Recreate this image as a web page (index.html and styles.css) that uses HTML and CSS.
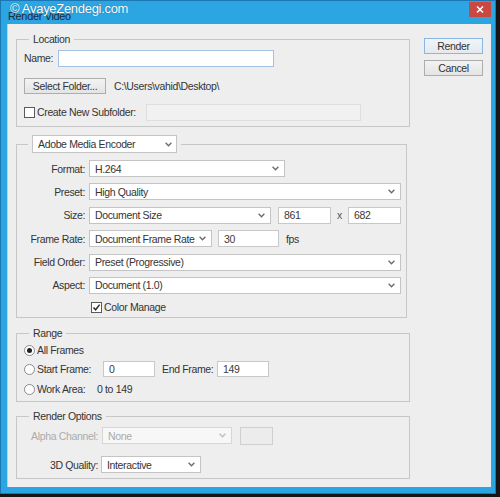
FILE: index.html
```html
<!DOCTYPE html>
<html>
<head>
<meta charset="utf-8">
<title>Render Video</title>
<link rel="stylesheet" href="styles.css">
</head>
<body>
<div class="window">
  <div class="titlebar">
    <span class="title">Render Video</span>
    <span class="watermark">© AvayeZendegi.com</span>
    <div class="close">
      <svg width="8" height="7" viewBox="0 0 8 7"><path d="M1 0.5 L7 6.5 M7 0.5 L1 6.5" stroke="#fff" stroke-width="1.5"/></svg>
    </div>
  </div>
  <div class="client">
    <div class="main">
      <fieldset class="group location">
        <legend>Location</legend>
        <div class="row name-row">
          <span class="name-label">Name:</span>
          <div class="input focus name-input"></div>
        </div>
        <div class="row folder-row">
          <div class="btn folder-btn">Select Folder...</div>
          <span class="path">C:\Users\vahid\Desktop\</span>
        </div>
        <div class="row sub-row">
          <span class="check"></span>
          <span class="sub-label">Create New Subfolder:</span>
          <div class="input disabled sub-input"></div>
        </div>
      </fieldset>

      <fieldset class="group encoder">
        <legend class="select-legend">
          <div class="select enc-select"><span>Adobe Media Encoder</span><svg class="chev" width="7" height="5" viewBox="0 0 7 5"><path d="M0.6 0.8 L3.5 3.8 L6.4 0.8" fill="none" stroke="#6a6a6a" stroke-width="1.3"/></svg></div>
        </legend>
        <div class="form-grid">
          <span class="lbl">Format:</span>
          <div class="ctl"><div class="select w-format"><span>H.264</span><svg class="chev" width="7" height="5" viewBox="0 0 7 5"><path d="M0.6 0.8 L3.5 3.8 L6.4 0.8" fill="none" stroke="#6a6a6a" stroke-width="1.3"/></svg></div></div>

          <span class="lbl">Preset:</span>
          <div class="ctl"><div class="select w-full"><span>High Quality</span><svg class="chev" width="7" height="5" viewBox="0 0 7 5"><path d="M0.6 0.8 L3.5 3.8 L6.4 0.8" fill="none" stroke="#6a6a6a" stroke-width="1.3"/></svg></div></div>

          <span class="lbl">Size:</span>
          <div class="ctl">
            <div class="select w-size"><span>Document Size</span><svg class="chev" width="7" height="5" viewBox="0 0 7 5"><path d="M0.6 0.8 L3.5 3.8 L6.4 0.8" fill="none" stroke="#6a6a6a" stroke-width="1.3"/></svg></div>
            <div class="input num w-dim first-dim">861</div>
            <span class="times">x</span>
            <div class="input num w-dim">682</div>
          </div>

          <span class="lbl">Frame Rate:</span>
          <div class="ctl">
            <div class="select w-rate"><span>Document Frame Rate</span><svg class="chev" width="7" height="5" viewBox="0 0 7 5"><path d="M0.6 0.8 L3.5 3.8 L6.4 0.8" fill="none" stroke="#6a6a6a" stroke-width="1.3"/></svg></div>
            <div class="input num w-fps">30</div>
            <span class="unit">fps</span>
          </div>

          <span class="lbl">Field Order:</span>
          <div class="ctl"><div class="select w-full"><span>Preset (Progressive)</span><svg class="chev" width="7" height="5" viewBox="0 0 7 5"><path d="M0.6 0.8 L3.5 3.8 L6.4 0.8" fill="none" stroke="#6a6a6a" stroke-width="1.3"/></svg></div></div>

          <span class="lbl">Aspect:</span>
          <div class="ctl"><div class="select w-full"><span>Document (1.0)</span><svg class="chev" width="7" height="5" viewBox="0 0 7 5"><path d="M0.6 0.8 L3.5 3.8 L6.4 0.8" fill="none" stroke="#6a6a6a" stroke-width="1.3"/></svg></div></div>

          <div class="ctl cm-row">
            <span class="check checked"><svg width="9" height="9" viewBox="0 0 9 9"><path d="M1.5 4.5 L3.6 6.8 L7.6 1.6" fill="none" stroke="#2b2b2b" stroke-width="1.5"/></svg></span>
            <span class="cm-label">Color Manage</span>
          </div>
        </div>
      </fieldset>

      <fieldset class="group range">
        <legend>Range</legend>
        <div class="row r-all">
          <span class="radio on"></span><span>All Frames</span>
        </div>
        <div class="row r-start">
          <span class="radio"></span><span class="r-label">Start Frame:</span>
          <div class="input num w-frame">0</div>
          <span class="end-label">End Frame:</span>
          <div class="input num w-frame">149</div>
        </div>
        <div class="row r-work">
          <span class="radio"></span><span class="w-label">Work Area:</span><span>0 to 149</span>
        </div>
      </fieldset>

      <fieldset class="group options">
        <legend>Render Options</legend>
        <div class="opt-grid">
          <span class="lbl dim">Alpha Channel:</span>
          <div class="ctl">
            <div class="select disabled w-alpha"><span>None</span><svg class="chev" width="7" height="5" viewBox="0 0 7 5"><path d="M0.6 0.8 L3.5 3.8 L6.4 0.8" fill="none" stroke="#bdbdbd" stroke-width="1.3"/></svg></div>
            <div class="swatch"></div>
          </div>
          <span class="lbl">3D Quality:</span>
          <div class="ctl"><div class="select w-quality"><span>Interactive</span><svg class="chev" width="7" height="5" viewBox="0 0 7 5"><path d="M0.6 0.8 L3.5 3.8 L6.4 0.8" fill="none" stroke="#6a6a6a" stroke-width="1.3"/></svg></div></div>
        </div>
      </fieldset>
    </div>

    <div class="side">
      <div class="btn default">Render</div>
      <div class="btn">Cancel</div>
    </div>
  </div>
</div>
</body>
</html>
```

FILE: styles.css
```css
html, body {
  margin: 0;
  padding: 0;
}
body {
  width: 500px;
  height: 497px;
  overflow: hidden;
  background: #161616;
  font-family: "Liberation Sans", Arial, sans-serif;
  font-size: 10.5px;
  letter-spacing: -0.35px;
  color: #343434;
}

.window {
  width: 496px;
  height: 494px;
  box-sizing: border-box;
  border: 1px solid #1a77b4;
  background: #2ba6e3;
  display: flex;
  flex-direction: column;
}

.titlebar {
  position: relative;
  flex: none;
  height: 23px;
  display: flex;
  padding: 0 4px 0 7px;
}
.title {
  margin-top: 9px;
  line-height: 13px;
  font-size: 11px;
  color: #1c2a36;
}
.watermark {
  position: absolute;
  left: 9px;
  top: 0;
  font-size: 13px;
  line-height: 15px;
  letter-spacing: -0.3px;
  color: #ffffff;
  text-shadow: 0 0 1px rgba(0, 40, 80, 0.6);
}
.close {
  margin-left: auto;
  margin-top: 1px;
  width: 22px;
  height: 15px;
  background: #c9483f;
  display: flex;
  align-items: center;
  justify-content: center;
}

.client {
  flex: 1;
  margin: 0 4px 6px 6px;
  padding: 9px 0 0 9px;
  background: #eeeeee;
  border-left: 1px solid #a9d8f2;
  box-sizing: border-box;
  display: flex;
  align-items: flex-start;
}
.main {
  width: 394px;
  flex: none;
  margin-left: -1px;
}
.side {
  margin-left: 14px;
  margin-top: 5px;
  width: 59px;
  display: flex;
  flex-direction: column;
  gap: 6px;
}

/* groups */
.group {
  margin: 0;
  padding: 0 7px;
  border: 1px solid #c7c7c7;
  min-width: 0;
}
.group legend {
  margin-left: 5px;
  padding: 0 4px;
  line-height: 13px;
}
.group legend.select-legend {
  margin-left: 4px;
  line-height: normal;
}

.row {
  display: flex;
  align-items: center;
}

/* location */
.location { padding-bottom: 6px; }
.name-row { margin-top: 4px; height: 16px; }
.name-label { width: 34px; }
.name-input { width: 216px; height: 16px; }
.folder-row { margin-top: 12px; height: 16px; }
.folder-btn { width: 82px; }
.path { margin-left: 8px; }
.sub-row { margin-top: 10px; height: 16px; }
.sub-label { margin-left: 2px; width: 109px; }
.sub-input { width: 215px; height: 16px; }

/* controls */
.select {
  display: flex;
  align-items: center;
  height: 17px;
  box-sizing: border-box;
  border: 1px solid #c4c4c4;
  background: #ffffff;
  padding: 0 5px;
}
.select span {
  flex: 1;
  white-space: nowrap;
  overflow: hidden;
}
.chev { flex: none; margin-left: 3px; }
.select.disabled {
  background: #f7f7f7;
  border-color: #d6d6d6;
  color: #a9a9a9;
}

.input {
  height: 17px;
  box-sizing: border-box;
  border: 1px solid #c8c8c8;
  background: #ffffff;
  display: flex;
  align-items: center;
  padding-left: 5px;
}
.input.focus { border-color: #a4c3e3; }
.input.disabled {
  background: #f1f1f1;
  border-color: #dedede;
}
.num { color: #3a3a3a; }

.btn {
  height: 16px;
  box-sizing: border-box;
  border: 1px solid #adadad;
  background: linear-gradient(#f3f3f3, #e4e4e4);
  display: flex;
  align-items: center;
  justify-content: center;
  color: #333;
}
.btn.default {
  border-color: #8cb6e2;
  background: linear-gradient(#f1f4f7, #e5e9ee);
}

.check {
  width: 11px;
  height: 11px;
  box-sizing: border-box;
  border: 1px solid #5a5a5a;
  background: #ffffff;
  flex: none;
  display: flex;
  align-items: center;
  justify-content: center;
}

.radio {
  width: 11px;
  height: 11px;
  box-sizing: border-box;
  border-radius: 50%;
  border: 1px solid #8a8a8a;
  background: #ffffff;
  flex: none;
  display: flex;
  align-items: center;
  justify-content: center;
  margin-right: 1px;
}
.radio.on::after {
  content: "";
  width: 5px;
  height: 5px;
  border-radius: 50%;
  background: #1f1f1f;
}

/* encoder */
.encoder {
  margin-top: 8px;
  margin-right: 3px;
  padding: 0 5px 3px 7px;
}
.enc-select {
  width: 145px;
  height: 18px;
  padding-right: 4px;
}
.form-grid {
  margin-top: 7px;
  display: grid;
  grid-template-columns: 61px 1fr;
  column-gap: 4px;
  row-gap: 6.4px;
  grid-template-rows: repeat(6, 17px) 14px;
}
.lbl {
  text-align: right;
  align-self: center;
  white-space: nowrap;
}
.ctl {
  display: flex;
  align-items: center;
}
.w-format { width: 196px; }
.w-full { width: 100%; }
.w-size { width: 182px; }
.w-dim { width: 53px; }
.first-dim { margin-left: 7px; }
.times { width: 17px; text-align: center; color: #555; }
.w-rate { width: 123px; }
.w-fps { width: 61px; margin-left: 6px; }
.unit { margin-left: 7px; }
.cm-row {
  grid-column: 2;
  margin-left: 2px;
}
.cm-label { margin-left: 2px; }

/* range */
.range {
  margin-top: 9px;
  padding-bottom: 5px;
}
.r-all { margin-top: 3px; height: 14px; }
.r-all span + span { margin-left: 1px; }
.r-start { margin-top: 4px; height: 16px; }
.r-label { width: 66px; margin-left: 1px; }
.w-frame { width: 52px; height: 16px; }
.end-label { width: 55px; margin-left: 7px; }
.r-work { margin-top: 5px; height: 14px; }
.w-label { width: 60px; margin-left: 1px; }

/* render options */
.options {
  margin-top: 8px;
  padding-bottom: 5px;
}
.opt-grid {
  margin-top: 4px;
  display: grid;
  grid-template-columns: 74px 1fr;
  column-gap: 3px;
  grid-template-rows: 17px 17px;
  row-gap: 12px;
}
.lbl.dim { color: #ababab; }
.w-alpha { width: 130px; margin-left: 1px; }
.swatch {
  margin-left: 8px;
  width: 33px;
  height: 18px;
  box-sizing: border-box;
  border: 1px solid #cfcfcf;
  background: #ececec;
}
.w-quality { width: 100px; }
```
